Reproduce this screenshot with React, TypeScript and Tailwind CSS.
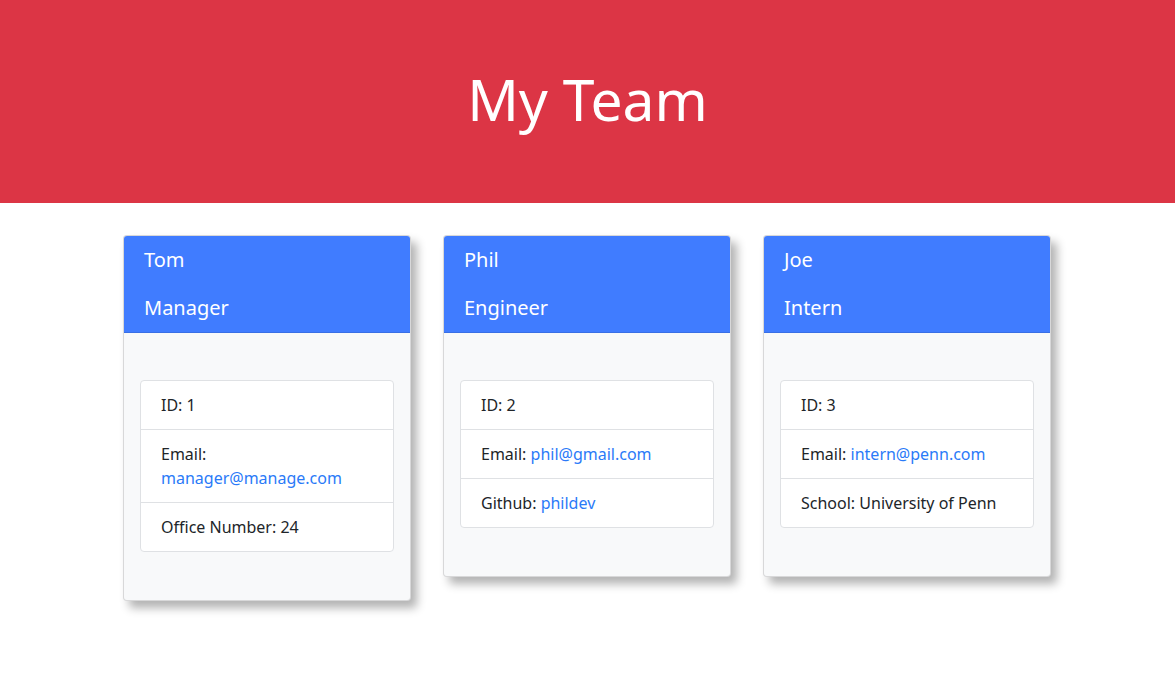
import React from "react";

type Row = { label: string; value: string; link?: boolean };
type Member = { name: string; role: string; rows: Row[] };

const members: Member[] = [
  {
    name: "Tom",
    role: "Manager",
    rows: [
      { label: "ID:", value: "1" },
      { label: "Email:", value: "manager@manage.com", link: true },
      { label: "Office Number:", value: "24" },
    ],
  },
  {
    name: "Phil",
    role: "Engineer",
    rows: [
      { label: "ID:", value: "2" },
      { label: "Email:", value: "phil@gmail.com", link: true },
      { label: "Github:", value: "phildev", link: true },
    ],
  },
  {
    name: "Joe",
    role: "Intern",
    rows: [
      { label: "ID:", value: "3" },
      { label: "Email:", value: "intern@penn.com", link: true },
      { label: "School:", value: "University of Penn" },
    ],
  },
];

function Card({ m }: { m: Member }) {
  return (
    <div className="w-[288px] rounded-[4px] border border-[rgba(0,0,0,0.13)] bg-[#f8f9fa] shadow-[6px_7px_10px_rgba(0,0,0,0.3)] overflow-hidden">
      <div className="bg-[#407cff] text-white px-5 pt-3 pb-3 flex flex-col gap-6 border-b border-[rgba(0,0,0,0.1)]">
        <div className="text-[20px] leading-[24px]">{m.name}</div>
        <div className="text-[20px] leading-[24px]">{m.role}</div>
      </div>
      <div className="px-4 pt-[47px] pb-[48px]">
        <ul className="bg-white rounded-[4px] border border-[#dfe1e4]">
          {m.rows.map((r, i) => (
            <li
              key={i}
              className={`px-5 py-3 text-[16px] leading-[24px] text-[#212529] ${
                i > 0 ? "border-t border-[#dfe1e4]" : ""
              }`}
            >
              {r.label}{" "}
              {r.link ? <a className="text-[#2a7af8]">{r.value}</a> : r.value}
            </li>
          ))}
        </ul>
      </div>
    </div>
  );
}

export default function App() {
  return (
    <div
      className="min-h-screen bg-white"
      style={{ fontFamily: '"Noto Sans", "Open Sans", sans-serif' }}
    >
      <header className="bg-[#dc3545] h-[203px] pt-[66px] flex justify-center">
        <h1 className="text-white text-[57px] leading-[67px] font-normal">My Team</h1>
      </header>
      <main className="flex justify-center items-start gap-8 pt-8 pr-px">
        {members.map((m) => (
          <Card key={m.name} m={m} />
        ))}
      </main>
    </div>
  );
}
